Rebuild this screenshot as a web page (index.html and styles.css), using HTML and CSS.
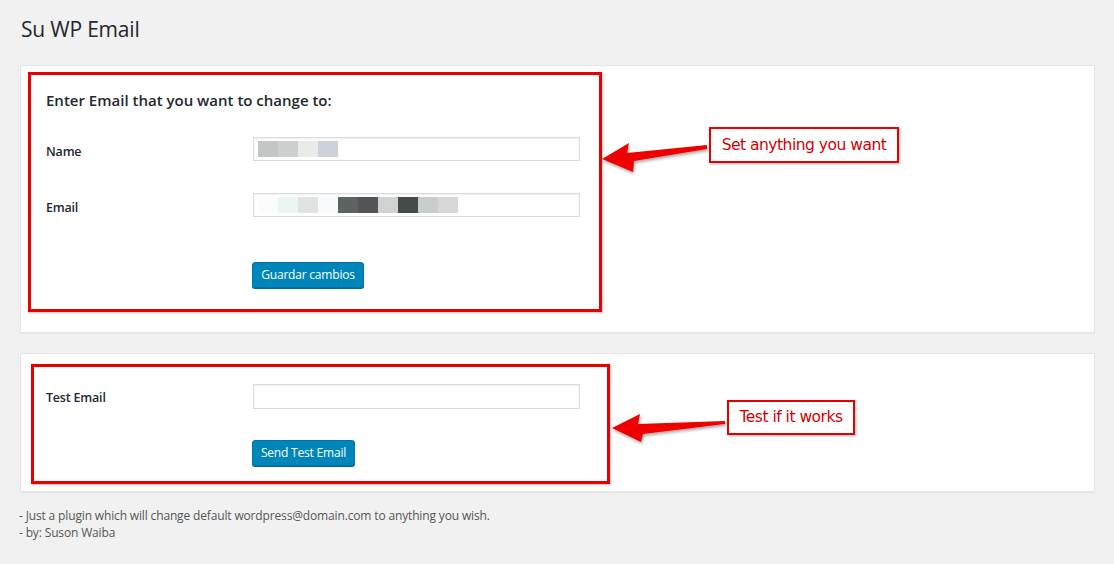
FILE: index.html
```html
<!DOCTYPE html>
<html lang="en">
<head>
<meta charset="utf-8">
<title>Su WP Email</title>
<link rel="stylesheet" href="styles.css">
</head>
<body>
<div class="page">
  <h1 class="title">Su WP Email</h1>

  <section class="panel panel-one">
    <div class="redbox redbox-one">
      <h2 class="heading">Enter Email that you want to change to:</h2>
      <div class="row row-name">
        <label class="label">Name</label>
        <div class="input">
          <span class="blur" style="background:#c4c6c6"></span><span class="blur" style="background:#cdd0ce"></span><span class="blur" style="background:#e8ebe8"></span><span class="blur" style="background:#cdd1d8"></span>
        </div>
      </div>
      <div class="row row-email">
        <label class="label">Email</label>
        <div class="input">
          <span class="blur" style="background:#fbfcfb"></span><span class="blur" style="background:#ecf6f1"></span><span class="blur" style="background:#e1e3e2"></span><span class="blur" style="background:#f8fafb"></span><span class="blur" style="background:#5d6360"></span><span class="blur" style="background:#525457"></span><span class="blur" style="background:#d0d2d3"></span><span class="blur" style="background:#464a48"></span><span class="blur" style="background:#c9cdcc"></span><span class="blur" style="background:#d7d7d9"></span>
        </div>
      </div>
      <div class="actions actions-one">
        <button class="button">Guardar cambios</button>
      </div>
    </div>
  </section>

  <section class="panel panel-two">
    <div class="redbox redbox-two">
      <div class="row row-test">
        <label class="label">Test Email</label>
        <div class="input input-test"></div>
      </div>
      <div class="actions actions-two">
        <button class="button">Send Test Email</button>
      </div>
    </div>
  </section>

  <div class="footer">
    <p>- Just a plugin which will change default wordpress@domain.com to anything you wish.</p>
    <p>- by: Suson Waiba</p>
  </div>

  <svg class="arrows" width="1114" height="564" viewBox="0 0 1114 564">
    <defs>
      <filter id="sh" x="-20%" y="-40%" width="140%" height="180%">
        <feDropShadow dx="1" dy="2" stdDeviation="1.5" flood-color="#000" flood-opacity="0.35"/>
      </filter>
    </defs>
    <polygon filter="url(#sh)" fill="#ee0000" points="707,145 707,149 634,161 633,172 602,159 629,143 627,153"/>
    <polygon filter="url(#sh)" fill="#ee0000" points="725,421 725,424 643,434 641,442 612,428 640,414 638,424"/>
  </svg>

  <div class="note note-one">Set anything you want</div>
  <div class="note note-two">Test if it works</div>
</div>
</body>
</html>
```

FILE: styles.css
```css
* { box-sizing: border-box; }

html, body {
  margin: 0;
  padding: 0;
  background: #f1f1f1;
}

body {
  font-family: "Open Sans", "Noto Sans", sans-serif;
  color: #23282d;
}

.page {
  position: relative;
  width: 1114px;
  height: 564px;
  padding: 0 19px 0 20px;
  overflow: hidden;
}

.title {
  margin: 0;
  padding: 17px 0 0 1px;
  font-size: 21px;
  line-height: 24px;
  font-weight: 400;
  color: #23282d;
  letter-spacing: -0.2px;
}

.panel {
  background: #fff;
  border: 1px solid #e5e5e5;
  box-shadow: 0 1px 1px rgba(0,0,0,0.04);
}

.panel-one {
  margin-top: 24px;
  height: 268px;
  padding: 6px 7px 0;
}

.panel-two {
  margin-top: 20px;
  height: 139px;
  padding: 10px 10px 0;
}

.redbox {
  border: 3px solid #e60000;
  box-shadow: 1px 1px 2px rgba(0,0,0,0.25);
}

.redbox-one {
  width: 574px;
  height: 240px;
  padding: 15px 0 0 15px;
}

.redbox-two {
  width: 579px;
  height: 120px;
  padding: 17px 0 0 12px;
}

.heading {
  margin: 0;
  font-size: 15px;
  line-height: 20px;
  font-weight: 600;
  color: #23282d;
  letter-spacing: 0;
}

.row {
  display: flex;
  align-items: center;
}

.row-name { margin-top: 27px; }
.row-email { margin-top: 32px; }

.label {
  width: 207px;
  flex: none;
  font-size: 12.5px;
  font-weight: 600;
  color: #23282d;
  position: relative;
  top: 2px;
  letter-spacing: -0.2px;
}

.row-test .label { top: 1px; }

.input {
  width: 327px;
  height: 24px;
  border: 1px solid #dcdcdc;
  box-shadow: inset 0 1px 2px rgba(0,0,0,0.07);
  background: #fff;
  display: flex;
  align-items: center;
  padding-left: 4px;
}

.input-test { height: 25px; }

.blur {
  display: block;
  width: 20px;
  height: 16px;
}

.actions-one { margin-top: 45px; padding-left: 206px; }
.actions-two { margin-top: 31px; padding-left: 206px; }

.button {
  display: block;
  height: 26px;
  padding: 0;
  white-space: nowrap;
  text-align: center;
  font-family: "Open Sans", "Noto Sans", sans-serif;
  font-size: 12px;
  line-height: 24px;
  color: #fff;
  background: #0085ba;
  border: 1px solid #0073aa;
  border-radius: 3px;
  box-shadow: 0 1px 0 #006799;
  letter-spacing: -0.2px;
}

.actions-one .button { width: 112px; }
.actions-two .button { width: 103px; }

.footer {
  margin-top: 15px;
  margin-left: -1px;
  font-size: 12px;
  line-height: 17px;
  color: #555;
  letter-spacing: -0.15px;
}

.footer p { margin: 0; }

.arrows {
  position: absolute;
  left: 0;
  top: 0;
  pointer-events: none;
}

.note {
  position: absolute;
  background: #fff;
  border: 2px solid #e60000;
  box-shadow: 1px 1px 2px rgba(0,0,0,0.3);
  color: #d40000;
  font-family: "DejaVu Sans", sans-serif;
  font-size: 15.5px;
  line-height: 32px;
  text-align: center;
  letter-spacing: -0.5px;
}

.note-one {
  left: 709px;
  top: 127px;
  width: 190px;
  height: 36px;
}

.note-two {
  left: 727px;
  top: 400px;
  width: 128px;
  height: 35px;
  line-height: 31px;
}
```
